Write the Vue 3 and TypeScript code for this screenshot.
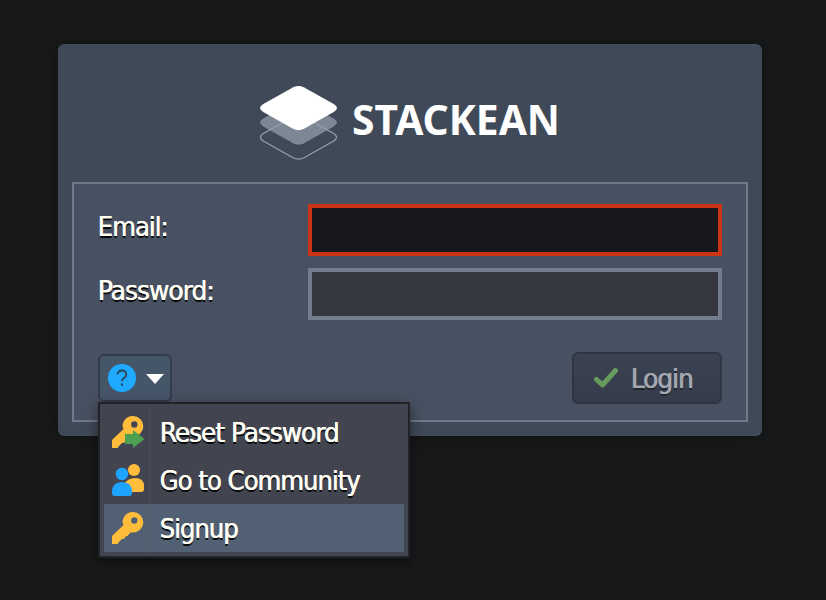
<script setup lang="ts">
import { ref } from 'vue'

interface MenuItem {
  icon: 'reset' | 'community' | 'key'
  label: string
  width: number
}

const items: MenuItem[] = [
  { icon: 'reset', label: 'Reset Password', width: 179 },
  { icon: 'community', label: 'Go to Community', width: 200 },
  { icon: 'key', label: 'Signup', width: 78 },
]
const active = ref(2)
const email = ref('')
const password = ref('')
const layer = 'M35.300 2.300Q40.500-.2 45.700 2.300L75.700 19Q82.300 22.900 75.700 27L46 43.800Q40.500 46.600 35 43.800L5.300 27Q-1.300 22.900 5.300 19Z'
</script>

<template>
  <main class="page">
    <form class="card" @submit.prevent>
      <header class="brand">
        <svg class="logo" width="302" height="80" viewBox="0 0 302 80">
          <path class="layer-mid" :d="layer" transform="translate(0 14.5)" />
          <path class="layer-outline" :d="layer" transform="translate(.5 29.500) scale(.988)" />
          <path class="layer-top" :d="layer" />
          <text x="94" y="50" textLength="208" lengthAdjust="spacingAndGlyphs">STACKEAN</text>
        </svg>
      </header>
      <section class="fields">
        <label class="row">
          <svg class="caption" width="210" height="52"><text x="-.5" y="32" textLength="70" lengthAdjust="spacingAndGlyphs">Email:</text></svg>
          <input v-model="email" class="invalid" type="text" />
        </label>
        <label class="row">
          <svg class="caption" width="210" height="52"><text x="-.5" y="32" textLength="116" lengthAdjust="spacingAndGlyphs">Password:</text></svg>
          <input v-model="password" type="password" />
        </label>
        <div class="actions">
          <div class="help-wrap">
            <button class="help" type="button" aria-label="Help">
              <svg width="70" height="44" viewBox="0 0 70 44">
                <circle cx="22" cy="22" r="14" fill="#1eabff" />
                <path d="M17.500 18.500Q18 14.500 22 14.500T26.300 18.500Q26.300 20.700 24 22.100Q22 23.300 22 25.200" fill="none" stroke="#294454" stroke-width="1.800" />
                <path d="M21 27.500h2v2.300h-2z" fill="#294454" />
                <path d="M46 18h18l-9 10z" fill="#fff" />
              </svg>
            </button>
            <div class="menu" role="menu">
              <div
                v-for="(item, i) in items"
                :key="item.icon"
                class="item"
                :class="{ active: i === active }"
                role="menuitem"
                @mouseenter="active = i"
              >
                <svg class="icon" width="34" height="32" viewBox="0 0 34 32">
                  <template v-if="item.icon === 'community'">
                    <circle cx="22" cy="6" r="6" fill="#ffbd3b" />
                    <path d="M12 28V20Q16 14 23 14Q32 14 32 22V25Q32 28 29 28Z" fill="#ffbd3b" />
                    <path d="M0 28Q0 18 10 18T20 28V29Q20 32 17 32H3Q0 32 0 29Z" fill="#1ea4ff" />
                    <circle cx="10" cy="10" r="6.200" fill="#1ea4ff" />
                  </template>
                  <template v-else>
                    <path fill-rule="evenodd" d="M21 0A10.300 10.300 0 0 1 21 20.600H18.500L15.500 24L13.500 24.500L12.500 26.500L10 27L6 31V32H0V24L11.500 13Q10.500 11 10.500 9A10 10 0 0 1 21 0ZM22.300 5.300A3.200 3.200 0 1 0 22.300 11.700A3.200 3.200 0 1 0 22.300 5.300Z" fill="#ffbd3b" />
                    <path v-if="item.icon === 'reset'" d="M13 18h8v-4l11.500 9L21 32v-4h-8z" fill="#4ba052" />
                  </template>
                </svg>
                <svg class="caption" width="240" height="48"><text x="-.5" y="34" :textLength="item.width" lengthAdjust="spacingAndGlyphs">{{ item.label }}</text></svg>
              </div>
            </div>
          </div>
          <button class="login" type="submit" disabled>
            <svg width="26" height="22" viewBox="0 0 26 22"><path d="M3.500 12.500L9.500 18L22.500 3.500" fill="none" stroke="#659b5c" stroke-width="5" stroke-linecap="round" stroke-linejoin="round" /></svg>
            <svg class="caption" width="70" height="48"><text x="-.5" y="34" textLength="62" lengthAdjust="spacingAndGlyphs">Login</text></svg>
          </button>
        </div>
      </section>
    </form>
  </main>
</template>

<style>
body {
  margin: 0;
  background: #18191b;
}
</style>

<style scoped>
.page {
  box-sizing: border-box;
  height: 600px;
  padding: 44px 64px 0 58px;
  overflow: hidden;
  background: linear-gradient(#18191b, #17191a);
}
.card {
  box-sizing: border-box;
  height: 392px;
  padding: 0 14px;
  border-radius: 6px;
  background: #404958;
  box-shadow: 0 0 16px rgba(0, 0, 0, 0.35);
}
.brand {
  box-sizing: border-box;
  height: 138px;
  padding: 41px 0 0 186px;
}
.logo {
  display: block;
  overflow: visible;
}
.logo text {
  font: bold 42px 'Noto Sans', sans-serif;
  fill: #fff;
}
.layer-top { fill: #fff; }
.layer-mid { fill: #7e8894; }
.layer-outline { fill: none; stroke: #98a1ae; stroke-width: 1.2; }
.fields {
  box-sizing: border-box;
  display: flex;
  flex-direction: column;
  gap: 12px;
  height: 240px;
  padding: 20px 24px;
  border: 2px solid #717a8a;
  background: #485161;
}
.row {
  display: flex;
  height: 52px;
}
.caption {
  display: block;
  flex: none;
  overflow: visible;
}
.caption text {
  font: 26px 'DejaVu Sans Condensed', 'DejaVu Sans', sans-serif;
  font-stretch: condensed;
  letter-spacing: -0.9px;
  fill: #fffef5;
  text-shadow: 0.6px 0 0 #fffef5, 0.3px 2px 0 #080a0c;
}
input {
  box-sizing: border-box;
  width: 414px;
  height: 52px;
  margin: 0;
  padding: 0 8px;
  border: 4px solid #747d8d;
  border-radius: 0;
  outline: none;
  background: #35383f;
  color: #fff;
}
input.invalid {
  border-color: #cb3516;
  background: #17181b;
}
.actions {
  display: flex;
  justify-content: space-between;
  margin-top: 20px;
}
.help-wrap {
  position: relative;
  margin-top: 2px;
}
button {
  box-sizing: border-box;
  display: flex;
  padding: 0;
  border: 2px solid #343b4b;
  border-radius: 6px;
}
.help {
  width: 74px;
  height: 48px;
  background: #465669;
}
.login {
  align-items: center;
  width: 150px;
  height: 52px;
  padding-left: 19px;
  gap: 12px;
  border-color: #303543;
  background: linear-gradient(#3b4252, #353b4b);
}
.login .caption text {
  fill: #a3a7b0;
  text-shadow: 0.6px 0 0 #a3a7b0, 0.3px 2px 0 #20272d;
}
.menu {
  position: absolute;
  top: 48px;
  left: 0;
  box-sizing: border-box;
  width: 312px;
  height: 156px;
  padding: 4px;
  border: 2px solid #222326;
  background: linear-gradient(90deg, transparent 49px, #474a56 49px, #474a56 51px, transparent 51px) #424550;
  box-shadow: 0 4px 12px rgba(0, 0, 0, 0.5);
}
.item {
  display: flex;
  align-items: center;
  height: 48px;
  padding-left: 8px;
  gap: 14px;
}
.item.active {
  background: linear-gradient(90deg, transparent 45px, #56606f 45px, #56606f 47px, transparent 47px) #526073;
}
</style>
